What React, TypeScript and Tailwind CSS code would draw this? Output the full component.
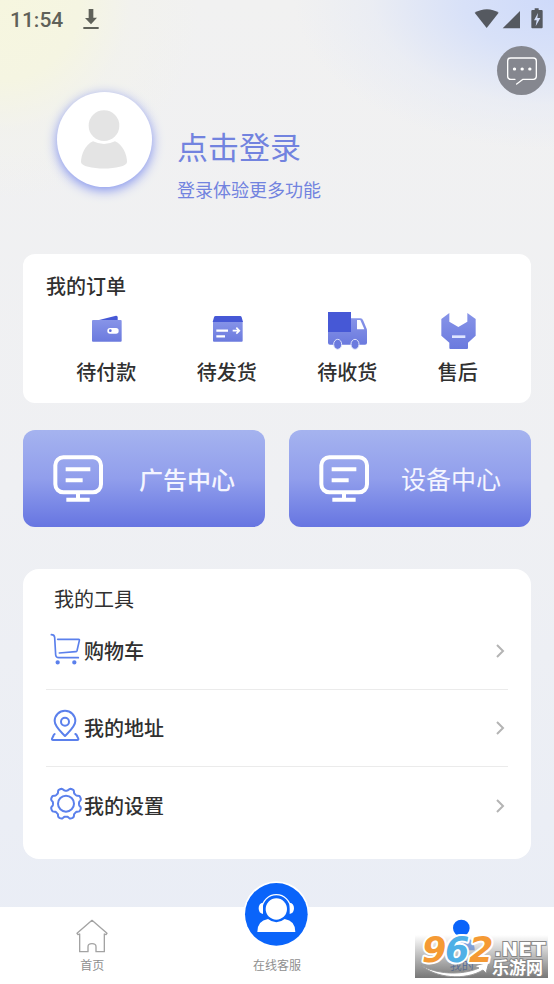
import type { ReactNode } from 'react';

interface OrderEntry {
  label: string;
  icon: ReactNode;
}

interface ToolEntry {
  label: string;
  icon: ReactNode;
}

function StatusBar() {
  return (
    <div className="flex h-10 items-center justify-between pr-2 pl-[10px]">
      <div className="flex items-center gap-5 text-[#5f6159]">
        <span className="font-[Roboto,sans-serif] text-[21px] leading-6 font-medium">11:54</span>
        <svg className="h-[22px] w-4" viewBox="0 0 48 66" fill="currentColor">
          <path d="M17 0h14v26h11L24 46 6 27h11zM1 54h46v6H1z" />
        </svg>
      </div>
      <svg className="h-[22px] w-[72px] overflow-visible" viewBox="0 0 216 66" fill="#555960">
        <path d="M2 11C24-3 54-3 74 11L38 57z" />
        <path d="M138 6v52H86z" />
        <path
          fillRule="evenodd"
          d="M182-2h12v5h9q3 0 3 3v49q0 3-3 3h-28q-3 0-3-3V6q0-3 3-3h7zM192 12l-12 22h8l-3 18 14-25h-9z"
        />
      </svg>
    </div>
  );
}

function WalletIcon() {
  return (
    <svg className="h-10 w-10" viewBox="0 0 120 120">
      <path d="M30 32 90 17q4 0 5 4v11z" fill="#4658d6" />
      <rect x="18" y="30" width="89" height="65" rx="3" fill="url(#soft)" />
      <rect x="64" y="54" width="34" height="17" rx="8" fill="#fff" />
      <circle cx="73" cy="62" r="4" fill="#5c6ad9" />
    </svg>
  );
}

function ParcelIcon() {
  return (
    <svg className="h-10 w-10" viewBox="0 0 120 120">
      <rect x="18" y="32" width="89" height="63" rx="3" fill="url(#soft)" />
      <path d="M26 18h73q4 0 5 4l4 14H17l4-14q1-4 5-4z" fill="#4658d6" />
      <path d="M28 62h35M28 79h26" stroke="#fff" strokeWidth="7" />
      <path d="M77 62h19M88 53l9 9-9 9" stroke="#fff" strokeWidth="5" fill="none" />
    </svg>
  );
}

function TruckIcon() {
  return (
    <svg className="h-10 w-10" viewBox="0 0 120 120">
      <path d="M3 60h69V25h28q6 0 9 7l9 22q2 4 2 8v36q0 6-6 6H9q-6 0-6-6z" fill="url(#soft)" />
      <path d="M3 6h69v60H3z" fill="#4658d6" />
      <path d="M90 30h10l12 28H90z" fill="#fff" />
      <ellipse cx="32" cy="103" rx="12" ry="15" fill="#6b7ade" stroke="#dfe3fa" strokeWidth="3" />
      <ellipse cx="84" cy="103" rx="12" ry="15" fill="#6b7ade" stroke="#dfe3fa" strokeWidth="3" />
    </svg>
  );
}

function ServiceIcon() {
  return (
    <svg className="h-10 w-10" viewBox="0 0 120 120">
      <path
        d="M10 27 34 9v26l27 16 27-16V9l25 18v50L90 98v16q0 3-3 3H37q-3 0-3-3V98L10 77z"
        fill="url(#soft)"
      />
      <path d="M42 80h40" stroke="#dfe5ff" strokeWidth="8" />
    </svg>
  );
}

function MonitorIcon() {
  return (
    <svg
      className="h-[47px] w-[50px] shrink-0"
      viewBox="0 0 150 141"
      fill="none"
      stroke="#fff"
      strokeWidth="12"
    >
      <rect x="7" y="7" width="137" height="105" rx="24" />
      <path d="M38 43h74M38 76h51M75 114v18M40 134h70" />
    </svg>
  );
}

function CartIcon() {
  return (
    <svg className="h-[34px] w-[34px]" viewBox="0 0 102 102" fill="none" stroke="#5b80ec" strokeWidth="5" strokeLinecap="round">
      <path d="M7 8q9 0 10 8l3 53q1 8 9 8h59" />
      <path d="M26 22h63q3 0 2 4l-7 30q-1 3-4 3l-49 4" />
      <circle cx="26" cy="91" r="4" fill="#5b80ec" />
      <circle cx="76" cy="91" r="4" fill="#5b80ec" />
    </svg>
  );
}

function PinIcon() {
  return (
    <svg
      className="h-[34px] w-[34px]"
      viewBox="0 0 102 102"
      fill="none"
      stroke="#5b80ec"
      strokeWidth="6"
      strokeLinecap="round"
      strokeLinejoin="round"
    >
      <path d="M48 81C36 68 17 53 17 36a31 31 0 0 1 62 0c0 17-19 32-31 45z" />
      <circle cx="48" cy="38" r="12" />
      <path d="M17 75q-3 2-4 6l-4 8q-1 4 3 4h73q4 0 3-4l-4-8q-1-4-5-6" />
    </svg>
  );
}

// Outline of an eight-toothed cog centred on 51,50
const cogPoints = Array.from({ length: 128 }, (_, i) => {
  const angle = (i / 128) * Math.PI * 2;
  const r = 43 - 4 * Math.tanh(2 * Math.cos(angle * 8));
  return `${(51 + r * Math.sin(angle)).toFixed(1)},${(50 - r * Math.cos(angle)).toFixed(1)}`;
}).join(' ');

function GearIcon() {
  return (
    <svg
      className="h-[34px] w-[34px]"
      viewBox="0 0 102 102"
      fill="none"
      stroke="#5b80ec"
      strokeWidth="6"
      strokeLinejoin="round"
    >
      <polygon points={cogPoints} />
      <circle cx="51" cy="50" r="24" />
    </svg>
  );
}

const orders: OrderEntry[] = [
  { label: '待付款', icon: <WalletIcon /> },
  { label: '待发货', icon: <ParcelIcon /> },
  { label: '待收货', icon: <TruckIcon /> },
  { label: '售后', icon: <ServiceIcon /> },
];

const tools: ToolEntry[] = [
  { label: '购物车', icon: <CartIcon /> },
  { label: '我的地址', icon: <PinIcon /> },
  { label: '我的设置', icon: <GearIcon /> },
];

function Watermark() {
  return (
    <div className="pointer-events-none absolute right-1.5 bottom-1.5 h-[43px] w-[133px] bg-linear-to-b from-[#888888]/0 to-[#707070]/95">
      <svg className="absolute inset-0 h-full w-full overflow-visible" viewBox="0 0 133 43">
        <path
          d="M6 30c14 9 40 11 58 3l-5-2 15-4-3 11-3-3C50 46 20 43 6 30z"
          fill="#fff"
          stroke="#999"
        />
        <g
          fontFamily="DejaVu Sans, sans-serif"
          fontWeight="700"
          fontStyle="italic"
          fontSize="35"
          stroke="#fff"
          strokeWidth="4"
          strokeLinejoin="round"
          paintOrder="stroke"
        >
          <text x="7" y="27" fill="#f59a34">9</text>
          <text x="30" y="27" fill="#4fb0e6">6</text>
          <text x="54" y="27" fill="#f59a34">2</text>
        </g>
        <g fill="#fff" stroke="#888" strokeWidth="2" paintOrder="stroke" fontWeight="700">
          <text x="79" y="21" fontFamily="DejaVu Sans, sans-serif" fontSize="20">.NET</text>
          <text x="77" y="39" fontFamily="Noto Sans CJK SC, sans-serif" fontSize="17">乐游网</text>
        </g>
      </svg>
    </div>
  );
}

function BottomNav() {
  return (
    <nav className="relative mt-auto grid h-[77px] grid-cols-3 bg-white text-xs leading-4 text-[#8f8f8f]">
      <a href="#home" className="flex flex-col items-center gap-1 pt-3">
        <svg className="h-[34px] w-8" viewBox="0 0 96 102" fill="none" stroke="#a3a3a3" strokeWidth="4" strokeLinejoin="round">
          <path d="M48 4 3 43l3 4 5-2v53h25V83q0-9 12-9t12 9v15h25V45l5 2 3-4z" />
        </svg>
        首页
      </a>
      <a href="#service" className="flex flex-col items-center gap-[9px]">
        <svg className="-mt-[26px] h-[67px] w-[67px] shrink-0" viewBox="0 0 201 201">
          <circle cx="100" cy="100" r="99" fill="#fff" />
          <circle cx="100" cy="100" r="94" fill="#0a64fa" />
          <circle cx="100" cy="84" r="32" fill="#fff" />
          <path d="M57 84a43 43 0 0 1 86 0" fill="none" stroke="#fff" strokeWidth="4" />
          <path d="M60 65v34q-13-2-13-17t13-17zM140 65v34q13-2 13-17t-13-17z" fill="#fff" />
          <path d="M43 153q0-34 32-39 25 20 50 0 32 5 32 39z" fill="#fff" />
        </svg>
        在线客服
      </a>
      <a href="#mine" className="flex flex-col items-center gap-1 pt-3 text-[#1463e8]">
        <svg className="h-[34px] w-8" viewBox="0 0 96 102" fill="#0a64fa">
          <circle cx="46" cy="27" r="25" />
          <path d="M10 94q0-36 30-38h16q30 2 30 38z" opacity="0.5" />
        </svg>
        我的
      </a>
      <Watermark />
    </nav>
  );
}

export default function App() {
  return (
    <div className="relative flex min-h-screen flex-col bg-[radial-gradient(circle_at_0%_0%,#f6f6df_0px,#f5f5e2_80px,#f3f3ea80_130px,#f1f1f100_200px),radial-gradient(ellipse_260px_150px_at_100%_0%,#cedafa_0%,#d8e1f8_35%,#e4e9f680_70%,#f0f1f200_100%),linear-gradient(#f1f1f1,#eff0f3_50%,#e9edf6)] font-['Noto_Sans_CJK_SC',sans-serif] text-[#303030]">
      {/* Shared fill for the order icons */}
      <svg className="absolute h-0 w-0" aria-hidden="true">
        <defs>
          <linearGradient id="soft" x1="0" y1="0" x2="0" y2="1">
            <stop offset="0" stopColor="#8794e8" />
            <stop offset="1" stopColor="#6b7ade" />
          </linearGradient>
        </defs>
      </svg>

      <StatusBar />

      <button
        aria-label="消息"
        className="absolute top-[46px] right-2 flex h-[49px] w-[49px] items-center justify-center rounded-full bg-[#85878f]"
      >
        <svg className="h-[30px] w-8" viewBox="0 0 96 90" fill="none" stroke="#fff" strokeWidth="4" strokeLinecap="round" strokeLinejoin="round">
          <path d="M27 70H14q-9 0-9-9V15q0-9 9-9h68q9 0 9 9v46q0 9-9 9H51L32 84" />
          <path d="M25 39h1M48 39h1M71 39h1" strokeWidth="9" />
        </svg>
      </button>

      {/* Profile */}
      <header className="flex items-start gap-[25px] pt-[52px] pl-[57px] text-[#7283df]">
        <div className="h-[95px] w-[95px] rounded-full bg-white shadow-[0_3px_12px_#7f90ee]">
          <svg className="h-full w-full" viewBox="0 0 285 285" fill="#e4e4e4">
            <circle cx="141" cy="101" r="46" />
            <path d="M108 148q33 16 66 0c24 10 36 42 36 62 0 26-138 26-138 0 0-20 12-52 36-62z" />
          </svg>
        </div>
        <div className="flex flex-col gap-[9px] pt-[34px]">
          <a href="#login" className="text-[31px] leading-10">点击登录</a>
          <p className="text-lg leading-7">登录体验更多功能</p>
        </div>
      </header>

      <main className="mx-[23px] mt-[51px] flex flex-col pb-12">
        {/* Orders */}
        <section className="rounded-xl bg-white px-[23px] pt-5 pb-[17px]">
          <h2 className="text-xl leading-6 font-medium">我的订单</h2>
          <div className="mt-3 flex justify-around">
            {orders.map((order) => (
              <button key={order.label} className="flex flex-col items-center gap-2 text-xl leading-7 font-medium">
                {order.icon}
                {order.label}
              </button>
            ))}
          </div>
        </section>

        <div className="mt-[27px] grid grid-cols-2 gap-6 text-[#f4f5ff]">
          <button className="flex h-[97px] items-center justify-between rounded-xl bg-linear-to-b from-[#a5b3ef] via-[#919eec] to-[#6775e1] px-[30px] text-2xl font-medium">
            <MonitorIcon />
            广告中心
          </button>
          <button className="flex h-[97px] items-center justify-between rounded-xl bg-linear-to-b from-[#a5b3ef] via-[#919eec] to-[#6775e1] px-[30px] text-[25px]">
            <MonitorIcon />
            设备中心
          </button>
        </div>

        {/* Tools */}
        <section className="mt-[42px] rounded-2xl bg-white px-[23px] pt-4 pb-[15px]">
          <h2 className="pl-2 text-xl leading-7">我的工具</h2>
          <ul className="divide-y divide-[#ebebeb]">
            {tools.map((tool) => (
              <li key={tool.label} className="h-[77px]">
                <button className="flex h-full w-full items-center gap-px pr-[3px] pl-[3px] text-xl font-medium">
                  <span className="mb-1">{tool.icon}</span>
                  {tool.label}
                  <svg className="ml-auto h-[14px] w-[9px]" viewBox="0 0 9 14" fill="none" stroke="#b4b4b4" strokeWidth="2">
                    <path d="m1 1 6 6-6 6" />
                  </svg>
                </button>
              </li>
            ))}
          </ul>
        </section>
      </main>

      <BottomNav />
    </div>
  );
}
